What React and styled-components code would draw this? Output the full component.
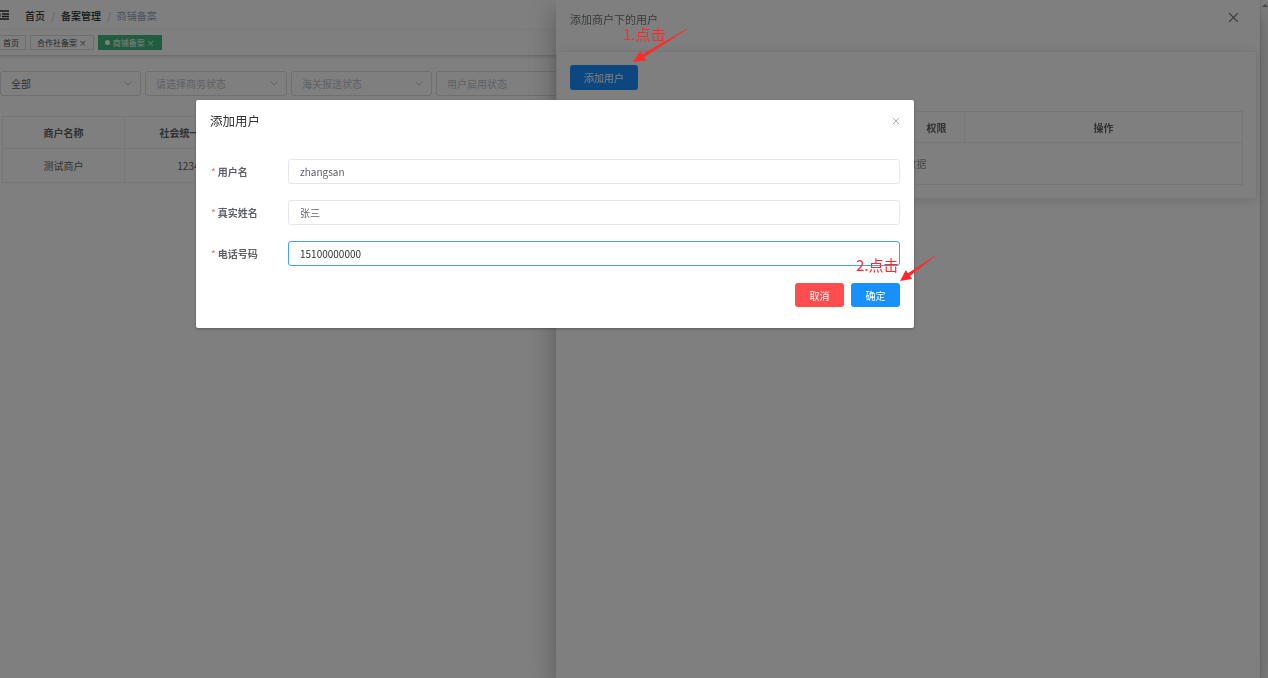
import React from "react";
import styled, { createGlobalStyle } from "styled-components";

const GlobalStyle = createGlobalStyle`
  html, body {
    margin: 0;
    padding: 0;
    width: 100%;
    height: 100%;
    overflow: hidden;
    background: #fff;
  }
  body {
    font-family: "Noto Sans CJK SC", "Noto Sans", sans-serif;
    color: #303133;
  }
  * {
    box-sizing: border-box;
  }
`;

const Shell = styled.div`
  display: flex;
  width: 1268px;
  height: 678px;
`;

const Main = styled.div`
  flex: 1;
  min-width: 0;
  background: #fff;
  overflow: hidden;
`;

const ScrollTrack = styled.div`
  width: 8px;
  background: #828282;
  border-left: 1px solid #787878;
  display: flex;
  justify-content: center;
  padding-top: 4px;
`;

const ScrollArrow = styled.div`
  width: 0;
  height: 0;
  border-left: 3px solid transparent;
  border-right: 3px solid transparent;
  border-bottom: 3px solid #4a4a4a;
`;

/* ---------- page behind ---------- */

const Navbar = styled.div`
  height: 30px;
  display: flex;
  align-items: center;
`;

const FoldIcon = styled.svg`
  width: 12px;
  height: 10px;
  margin-left: -3px;
  flex: none;
`;

const Crumbs = styled.div`
  display: flex;
  align-items: center;
  margin-left: 16px;
  font-size: 10px;
`;

const Crumb = styled.span`
  color: ${(p) => (p.$current ? "#97a8be" : "#303133")};
  font-weight: ${(p) => (p.$current ? 400 : 500)};
`;

const CrumbSep = styled.span`
  color: #c0c4cc;
  margin: 0 6px;
`;

const TagsBar = styled.div`
  height: 26px;
  display: flex;
  align-items: flex-start;
  gap: 4px;
  padding-top: 5px;
  border-bottom: 1px solid #d8dce5;
  box-shadow: 0 1px 3px 0 rgba(0, 0, 0, 0.12), 0 0 3px 0 rgba(0, 0, 0, 0.04);
`;

const Tag = styled.div`
  height: 15px;
  display: flex;
  align-items: center;
  gap: 3px;
  padding: 0 6px;
  font-size: 8px;
  border: 1px solid ${(p) => (p.$active ? "#42b983" : "#d8dce5")};
  background: ${(p) => (p.$active ? "#42b983" : "#fff")};
  color: ${(p) => (p.$active ? "#fff" : "#495060")};
  margin-left: ${(p) => (p.$first ? "-4px" : "0")};
`;

const TagDot = styled.span`
  width: 5px;
  height: 5px;
  border-radius: 50%;
  background: #fff;
`;

const FilterRow = styled.div`
  display: flex;
  gap: 4px;
  margin-top: 15px;
`;

const Select = styled.div`
  width: ${(p) => p.$w}px;
  height: 25px;
  flex: none;
  border: 1px solid #dcdfe6;
  border-radius: 3px;
  display: flex;
  align-items: center;
  justify-content: space-between;
  padding: 0 8px 0 10px;
  font-size: 10px;
  color: ${(p) => (p.$placeholder ? "#c0c4cc" : "#606266")};
`;

const PageTable = styled.div`
  margin: 20px 0 0 2px;
  width: 700px;
  border: 1px solid #ebeef5;
  font-size: 10px;
  color: #606266;
`;

const TRow = styled.div`
  display: grid;
  grid-template-columns: ${(p) => p.$cols};
  height: ${(p) => p.$h}px;
  border-top: ${(p) => (p.$first ? "none" : "1px solid #ebeef5")};
`;

const TCell = styled.div`
  display: flex;
  align-items: center;
  justify-content: center;
  border-left: ${(p) => (p.$first ? "none" : "1px solid #ebeef5")};
  font-weight: ${(p) => (p.$head ? 700 : 400)};
  color: #606266;
  white-space: nowrap;
  overflow: hidden;
`;

const EmptyRow = styled.div`
  height: 42px;
  border-top: 1px solid #ebeef5;
  display: flex;
  align-items: center;
  justify-content: center;
  color: #909399;
  font-size: 10px;
`;

/* ---------- drawer ---------- */

const Drawer = styled.aside`
  position: fixed;
  top: 0;
  right: 8px;
  width: 704px;
  height: 100%;
  background: #fff;
  z-index: 10;
  box-shadow: 0 8px 10px -5px rgba(0, 0, 0, 0.2),
    0 16px 24px 2px rgba(0, 0, 0, 0.14), 0 6px 30px 5px rgba(0, 0, 0, 0.12);
`;

const DrawerHeader = styled.div`
  height: 51px;
  display: flex;
  justify-content: space-between;
  align-items: flex-start;
  padding: 12px 21px 0 14px;
`;

const DrawerTitle = styled.span`
  font-size: 11px;
  line-height: 14px;
  color: #72767b;
`;

const DrawerCard = styled.div`
  margin-right: 3px;
  padding: 13px;
  border: 1px solid #ebeef5;
  border-radius: 3px;
  box-shadow: 0 2px 12px 0 rgba(0, 0, 0, 0.12);
`;

const SmallPrimary = styled.div`
  width: 68px;
  height: 25px;
  border-radius: 3px;
  background: #1890ff;
  color: #fff;
  font-size: 10px;
  display: flex;
  align-items: center;
  justify-content: center;
`;

const DrawerTable = styled.div`
  margin-top: 21px;
  border: 1px solid #ebeef5;
  font-size: 10px;
  color: #909399;
`;

/* ---------- mask + dialog ---------- */

const Mask = styled.div`
  position: fixed;
  top: 0;
  left: 0;
  bottom: 0;
  right: 8px;
  background: rgba(0, 0, 0, 0.5);
  z-index: 20;
`;

const Dialog = styled.div`
  position: fixed;
  top: 100px;
  left: 196px;
  width: 718px;
  height: 228px;
  background: #fff;
  border-radius: 2px;
  box-shadow: 0 1px 3px rgba(0, 0, 0, 0.3);
  z-index: 30;
  display: flex;
  flex-direction: column;
`;

const DialogHeader = styled.div`
  display: flex;
  justify-content: space-between;
  align-items: center;
  padding: 13px 14px 0;
`;

const DialogTitle = styled.span`
  font-size: 12.5px;
  line-height: 16px;
  color: #303133;
`;

const CloseX = styled.svg`
  width: ${(p) => p.$size}px;
  height: ${(p) => p.$size}px;
  flex: none;
`;

const Form = styled.div`
  padding: 30px 14px 0;
  display: flex;
  flex-direction: column;
  gap: 16px;
`;

const FormItem = styled.div`
  display: flex;
  align-items: center;
`;

const Label = styled.label`
  width: 78px;
  flex: none;
  display: flex;
  align-items: center;
  gap: 2px;
  font-size: 10px;
  line-height: 14px;
  font-weight: 700;
  color: #606266;
  padding-left: 1px;
`;

const Star = styled.span`
  color: #f56c6c;
  font-weight: 400;
`;

const Input = styled.div`
  flex: 1;
  height: 25px;
  border: 1px solid ${(p) => (p.$focus ? "#409eff" : "#e4e7ed")};
  border-radius: 3px;
  display: flex;
  align-items: center;
  padding-left: 11px;
  font-size: 10px;
  color: ${(p) => (p.$focus ? "#303133" : "#606266")};
`;

const Footer = styled.div`
  display: flex;
  justify-content: flex-end;
  gap: 7px;
  padding: 17px 14px 0;
`;

const Button = styled.div`
  width: 49px;
  height: 24px;
  border-radius: 3px;
  background: ${(p) => (p.$danger ? "#ff4d4f" : "#1890ff")};
  color: #fff;
  font-size: 10px;
  display: flex;
  align-items: center;
  justify-content: center;
`;

/* ---------- annotations ---------- */

const Annotations = styled.div`
  position: fixed;
  inset: 0;
  z-index: 40;
  pointer-events: none;
`;

const ArrowLayer = styled.svg`
  position: absolute;
  inset: 0;
`;

const Note = styled.span`
  position: absolute;
  left: ${(p) => p.$x}px;
  top: ${(p) => p.$y}px;
  font-size: 15px;
  line-height: 13px;
  color: #ff2b2b;
  white-space: nowrap;
`;

const Chevron = () => (
  <svg width="8" height="5" viewBox="0 0 8 5">
    <path d="M0.7 0.7 L4 4 L7.3 0.7" fill="none" stroke="#c0c4cc" strokeWidth="1" />
  </svg>
);

const Cross = ({ size, color, width }) => (
  <CloseX $size={size} viewBox="0 0 10 10">
    <path d="M1 1 L9 9 M9 1 L1 9" stroke={color} strokeWidth={width} />
  </CloseX>
);

const pageCols = "121px 150px 140px 140px 1fr";
const drawerCols = "85px 85px 85px 82px 56px 1fr";

export default function App() {
  return (
    <>
      <GlobalStyle />
      <Shell>
        <Main>
          <Navbar>
            <FoldIcon viewBox="0 0 12 10">
              <path d="M0 1h12M5 4h7M5 6.5h7M0 9h12" stroke="#303133" strokeWidth="1.3" />
              <path d="M3.5 3.2 L1 5.2 L3.5 7.2 Z" fill="#303133" />
            </FoldIcon>
            <Crumbs>
              <Crumb>首页</Crumb>
              <CrumbSep>/</CrumbSep>
              <Crumb>备案管理</Crumb>
              <CrumbSep>/</CrumbSep>
              <Crumb $current>商铺备案</Crumb>
            </Crumbs>
          </Navbar>
          <TagsBar>
            <Tag $first>首页</Tag>
            <Tag>合作社备案 ×</Tag>
            <Tag $active>
              <TagDot />
              商铺备案 ×
            </Tag>
          </TagsBar>
          <FilterRow>
            <Select $w={141}>
              全部
              <Chevron />
            </Select>
            <Select $w={142} $placeholder>
              请选择商务状态
              <Chevron />
            </Select>
            <Select $w={141} $placeholder>
              海关报送状态
              <Chevron />
            </Select>
            <Select $w={141} $placeholder>
              用户启用状态
              <Chevron />
            </Select>
          </FilterRow>
          <PageTable>
            <TRow $cols={pageCols} $h={31} $first>
              <TCell $first $head>商户名称</TCell>
              <TCell $head>社会统一信用代码</TCell>
              <TCell $head />
              <TCell $head />
              <TCell $head />
            </TRow>
            <TRow $cols={pageCols} $h={34}>
              <TCell $first>测试商户</TCell>
              <TCell>12345678</TCell>
              <TCell />
              <TCell />
              <TCell />
            </TRow>
          </PageTable>
        </Main>
        <ScrollTrack>
          <ScrollArrow />
        </ScrollTrack>
      </Shell>

      <Drawer>
        <DrawerHeader>
          <DrawerTitle>添加商户下的用户</DrawerTitle>
          <Cross size={11} color="#72767b" width={1.2} />
        </DrawerHeader>
        <DrawerCard>
          <SmallPrimary>添加用户</SmallPrimary>
          <DrawerTable>
            <TRow $cols={drawerCols} $h={30} $first>
              <TCell $first $head />
              <TCell $head />
              <TCell $head />
              <TCell $head />
              <TCell $head>权限</TCell>
              <TCell $head>操作</TCell>
            </TRow>
            <EmptyRow>暂无数据</EmptyRow>
          </DrawerTable>
        </DrawerCard>
      </Drawer>

      <Mask />

      <Dialog>
        <DialogHeader>
          <DialogTitle>添加用户</DialogTitle>
          <Cross size={8} color="#909399" width={0.9} />
        </DialogHeader>
        <Form>
          <FormItem>
            <Label>
              <Star>*</Star>
              <span>用户名</span>
            </Label>
            <Input>zhangsan</Input>
          </FormItem>
          <FormItem>
            <Label>
              <Star>*</Star>
              <span>真实姓名</span>
            </Label>
            <Input>张三</Input>
          </FormItem>
          <FormItem>
            <Label>
              <Star>*</Star>
              <span>电话号码</span>
            </Label>
            <Input $focus>15100000000</Input>
          </FormItem>
        </Form>
        <Footer>
          <Button $danger>取消</Button>
          <Button>确定</Button>
        </Footer>
      </Dialog>

      <Annotations>
        <ArrowLayer width="1268" height="678" viewBox="0 0 1268 678">
          <polygon
            fill="#ff2b2b"
            points="687.2,29.3 644.1,57.2 646.1,60.4 633,62 640.3,51.1 642.3,54.3 686.8,28.7"
          />
          <polygon
            fill="#ff2b2b"
            points="935.2,256.2 910,276 912.2,279.1 900,281 905.8,270.1 907.9,273.2 934.8,255.8"
          />
        </ArrowLayer>
        <Note $x={623} $y={27}>1.点击</Note>
        <Note $x={856} $y={258}>2.点击</Note>
      </Annotations>
    </>
  );
}
